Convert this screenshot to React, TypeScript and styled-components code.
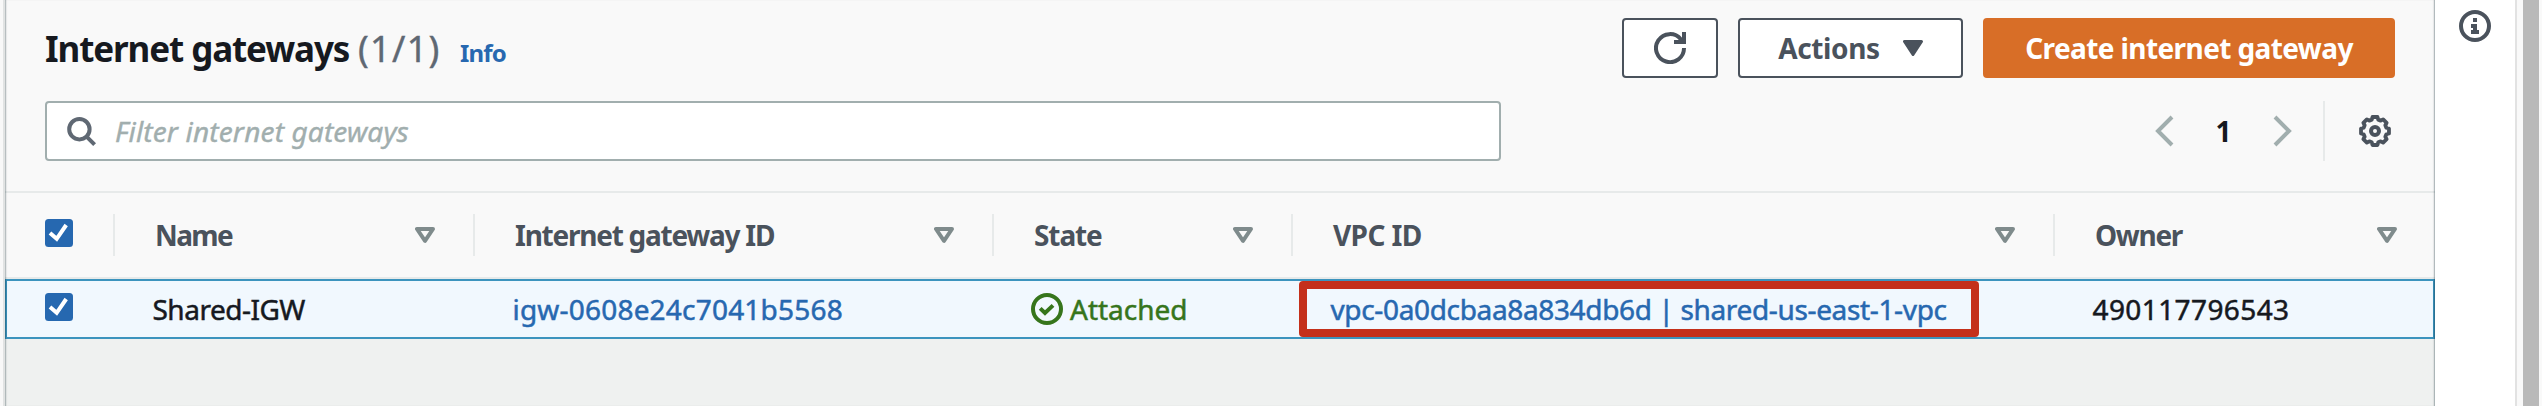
import React from 'react';
import styled, { createGlobalStyle } from 'styled-components';

const c = {
  ink: '#16191f', slate: '#4a525c', muted: '#5f6873', link: '#2768b0', line: '#e7eaea',
  surface: '#f9f9f9', orange: '#d86e27', green: '#36751b', outline: '#a1aeae', red: '#c4301b',
};

const GlobalStyle = createGlobalStyle`
  *, *::before, *::after { box-sizing: border-box; }
  body { margin: 0; background: #eff1f0; font-family: "Noto Sans", "Open Sans", sans-serif; font-size: 28px; color: ${c.ink}; }
`;

const Shell = styled.div`display: flex; height: 406px; overflow: hidden;`;
const Gutter = styled.div`width: 5px; background: #f8f8f8; border-right: 2px solid #e1e3e3;`;
const Main = styled.main`
  position: relative; width: 2430px; background: #eff1f0;
  &::after {
    content: ""; position: absolute; inset: 0; pointer-events: none;
    box-shadow: inset 1px 0 0 rgba(0, 28, 36, 0.2), inset -1px 0 0 rgba(0, 28, 36, 0.22), inset 2px 0 1px rgba(0, 28, 36, 0.08), inset -2px 0 1px rgba(0, 28, 36, 0.08);
  }
`;
const HelpRail = styled.aside`width: 82px; padding: 10px 0 0 24px; background: #fff; border-right: 2px solid #e2e2e2;`;
const ScrollTrack = styled.div`width: 25px; padding: 0 3px 0 6px; background: #f9f9f9; display: flex;`;
const ScrollThumb = styled.div`width: 16px; background: #b9b9b9;`;

const PanelHeader = styled.header`
  display: flex; flex-direction: column; gap: 23px; height: 193px; padding: 18px 40px 0;
  background: ${c.surface}; border-bottom: 2px solid ${c.line};
`;
const Bar = styled.div`display: flex; align-items: center; justify-content: space-between; height: 60px;`;
const Heading = styled.div`display: flex; align-items: baseline; margin-top: 5px; line-height: 60px; white-space: nowrap;`;
const Title = styled.h1`
  width: 306px; margin: 0; font-size: 35px; font-weight: 700; letter-spacing: -1.1px; line-height: 60px;
`;
const Counter = styled.span`width: 109px; padding-left: 7px; font-size: 36px; letter-spacing: 1.3px; color: ${c.muted}; -webkit-text-stroke: 0.4px;`;
const InfoLink = styled.a`font-size: 24px; font-weight: 700; letter-spacing: -0.8px; color: ${c.link};`;
const ButtonGroup = styled.div`display: flex; gap: 20px;`;
const Button = styled.button<{ $primary?: boolean; $w: number; $track?: number }>`
  display: flex; align-items: center; justify-content: center; gap: 23px;
  width: ${p => p.$w}px; height: 60px; padding: 0; border-radius: 4px;
  border: 2px solid ${p => (p.$primary ? c.orange : c.slate)};
  background: ${p => (p.$primary ? c.orange : '#fff')};
  color: ${p => (p.$primary ? '#fff' : c.slate)};
  font: 700 28px "Noto Sans", sans-serif; letter-spacing: ${p => p.$track ?? 0}px; white-space: nowrap;
`;
const Filter = styled.label`
  display: flex; align-items: center; gap: 18px; width: 1456px; height: 60px; padding-left: 18px;
  background: #fff; border: 2px solid ${c.outline}; border-radius: 4px; color: ${c.muted};
`;
const Placeholder = styled.span`font-style: italic; color: ${c.outline}; letter-spacing: 0.15px; -webkit-text-stroke: 0.4px;`;
const Pager = styled.nav`display: flex; align-items: center; height: 60px; padding-right: 4px; color: ${c.outline};`;
const PageNumber = styled.strong`width: 87px; text-align: center; color: ${c.ink};`;
const Preferences = styled.div`
  display: flex; align-items: center; height: 60px; margin-left: 24px; padding-left: 34px;
  border-left: 2px solid ${c.line}; color: ${c.slate};
`;

const columns = '110px 360px 519px 299px 762px 1fr';
const HeadRow = styled.div`
  display: grid; grid-template-columns: ${columns}; height: 86px; padding-top: 21px;
  background: ${c.surface}; border-bottom: 2px solid ${c.line};
`;
const HeadCell = styled.div<{ $track?: number }>`
  display: flex; align-items: center; justify-content: space-between; height: 42px; padding: 0 38px 0 40px;
  border-right: 2px solid ${c.line}; color: ${c.slate}; font-weight: 700; letter-spacing: ${p => p.$track ?? 0}px; white-space: nowrap;
  &:last-child { border-right: 0; }
  svg { margin-top: -1px; }
`;
const BodyRow = styled.div`
  display: grid; grid-template-columns: ${columns}; height: 60px; background: #f1f8fe;
  box-shadow: inset 0 0 0 2px #3c94be;
`;
const Cell = styled.div<{ $color?: string; $track?: number }>`
  position: relative; display: flex; align-items: center; gap: 7px; padding-left: 37.5px;
  color: ${p => p.$color ?? c.ink}; letter-spacing: ${p => p.$track ?? 0}px; white-space: nowrap;
  -webkit-text-stroke: 0.5px;
`;
const StatusCell = styled(Cell)`padding-left: 37px;`;
const Highlight = styled.div`
  position: absolute; left: 6px; top: 2px; width: 680px; height: 56px; border: 8px solid ${c.red}; border-radius: 4px;
`;
const CheckSlot = styled.div<{ $head?: boolean }>`
  display: flex; padding: ${p => (p.$head ? '5px' : '14px')} 0 0 40px; height: ${p => (p.$head ? '42px' : '60px')};
  border-right: ${p => (p.$head ? `2px solid ${c.line}` : '0')};
`;

const Icon = ({ children }: { children: React.ReactNode }) => (
  <svg width="32" height="32" viewBox="0 0 16 16" fill="none" stroke="currentColor" strokeWidth="2">{children}</svg>
);
const CheckBox = () => (
  <svg width="28" height="28" viewBox="0 0 28 28">
    <rect width="28" height="28" rx="3.5" fill="#2668b0" />
    <path d="M5 14l6.7 5.8L21.2 6" fill="none" stroke="#fff" strokeWidth="4" />
  </svg>
);
const SortIcon = () => (
  <svg width="20" height="16" viewBox="0 0 20 16">
    <path d="M2 2h16l-8 11.8z" fill="none" stroke="#7f8b8c" strokeWidth="4" strokeLinejoin="round" />
  </svg>
);
const Caret = () => (
  <svg width="20" height="16" viewBox="0 0 20 16">
    <path d="M1.5 1.5h17L10 14.5z" fill={c.slate} stroke={c.slate} strokeWidth="3" strokeLinejoin="round" />
  </svg>
);

// Eight-toothed gear outline: each tooth is a pair of outer points followed by a pair of valley points.
const gearPath = Array.from({ length: 8 }, (_, i) =>
  [[-10, 7.1], [10, 7.1], [16, 5.9], [29, 5.9]].map(([a, r]) => {
    const t = ((i * 45 + a) * Math.PI) / 180;
    return `${(8 + r * Math.cos(t)).toFixed(2)} ${(8 + r * Math.sin(t)).toFixed(2)}`;
  }).join('L')).join('L');

export default function App() {
  return (
    <>
      <GlobalStyle />
      <Shell>
        <Gutter />
        <Main>
          <PanelHeader>
            <Bar>
              <Heading>
                <Title>Internet gateways</Title>
                <Counter>(1/1)</Counter>
                <InfoLink>Info</InfoLink>
              </Heading>
              <ButtonGroup>
                <Button $w={96} aria-label="Refresh">
                  <Icon><path d="M15 8a7 7 0 1 1-1.6-4.4L14.6 5M10 5h5V0" /></Icon>
                </Button>
                <Button $w={225} $track={-0.4}>Actions<Caret /></Button>
                <Button $w={412} $track={-0.6} $primary>Create internet gateway</Button>
              </ButtonGroup>
            </Bar>
            <Bar>
              <Filter>
                <Icon><circle cx="7.2" cy="7.1" r="5.1" /><path d="M10.8 10.8l4 4" /></Icon>
                <Placeholder>Filter internet gateways</Placeholder>
              </Filter>
              <Pager>
                <Icon><path d="M12 1L5 8l7 7" /></Icon>
                <PageNumber>1</PageNumber>
                <Icon><path d="M4 1l7 7-7 7" /></Icon>
                <Preferences>
                  <Icon><path d={`M${gearPath}Z`} strokeWidth="1.9" strokeLinejoin="round" /><circle cx="8" cy="8" r="2" /></Icon>
                </Preferences>
              </Pager>
            </Bar>
          </PanelHeader>
          <HeadRow>
            <CheckSlot $head><CheckBox /></CheckSlot>
            <HeadCell $track={-1.6}>Name<SortIcon /></HeadCell>
            <HeadCell $track={-1.25}>Internet gateway ID<SortIcon /></HeadCell>
            <HeadCell $track={-1.1}>State<SortIcon /></HeadCell>
            <HeadCell $track={-0.6}>VPC ID<SortIcon /></HeadCell>
            <HeadCell $track={-1.3}>Owner<SortIcon /></HeadCell>
          </HeadRow>
          <BodyRow>
            <CheckSlot><CheckBox /></CheckSlot>
            <Cell $track={-0.5}>Shared-IGW</Cell>
            <Cell $color={c.link} $track={0.2}>igw-0608e24c7041b5568</Cell>
            <StatusCell $color={c.green}>
              <Icon><circle cx="8" cy="8" r="7" /><path d="M4.6 7.7L7 10l4-3.8" /></Icon>
              Attached
            </StatusCell>
            <Cell $color={c.link} $track={-0.35}>
              vpc-0a0dcbaa8a834db6d | shared-us-east-1-vpc
              <Highlight />
            </Cell>
            <Cell $track={0.4}>490117796543</Cell>
          </BodyRow>
        </Main>
        <HelpRail>
          <svg width="32" height="32" viewBox="0 0 16 16">
            <circle cx="8" cy="8" r="7" fill="none" stroke={c.slate} strokeWidth="2" />
            <path d="M7 4h2v2H7zM6 7h3v3h1v2H6v-2h1V9H6z" fill={c.slate} />
          </svg>
        </HelpRail>
        <ScrollTrack><ScrollThumb /></ScrollTrack>
      </Shell>
    </>
  );
}
